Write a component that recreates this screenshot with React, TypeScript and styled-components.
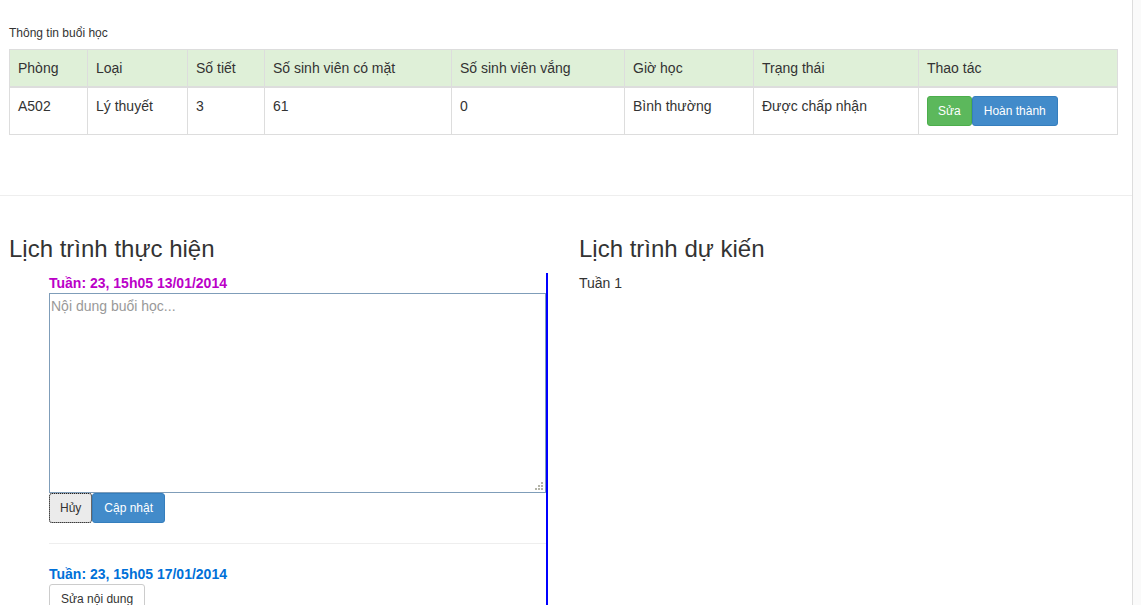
import styled, { createGlobalStyle } from "styled-components";

const GlobalStyle = createGlobalStyle`
  html, body {
    margin: 0;
    padding: 0;
    background: #fff;
  }
  body {
    font-family: "Liberation Sans", Arial, sans-serif;
    font-size: 14px;
    line-height: 20px;
    color: #333;
  }
  * {
    box-sizing: border-box;
  }
`;

const Page = styled.div`
  display: grid;
  grid-template-columns: 1fr 9px;
  height: 605px;
  overflow: hidden;
`;

const Main = styled.main`
  display: flex;
  flex-direction: column;
  min-width: 0;
`;

const SideStrip = styled.aside`
  border-left: 1px solid #ddd;
  background: #fafafa;
`;

const InfoSection = styled.section`
  padding: 25px 15px 60px 9px;
  border-bottom: 1px solid #eee;
`;

const Caption = styled.div`
  font-size: 12px;
  line-height: 17px;
  margin-bottom: 7px;
`;

const Table = styled.table`
  width: 1108px;
  border-collapse: collapse;
  table-layout: fixed;
  border: 1px solid #ddd;
`;

const HeadCell = styled.th`
  text-align: left;
  font-weight: normal;
  background: #dff0d8;
  padding: 8px;
  line-height: 20px;
  border: 1px solid #ddd;
  border-bottom-width: 2px;
  vertical-align: bottom;
`;

const Cell = styled.td`
  padding: 8px;
  line-height: 20px;
  border: 1px solid #ddd;
  vertical-align: top;
`;

const ButtonGroup = styled.div`
  display: flex;
`;

const Button = styled.button<{ $variant: "success" | "primary" | "default" | "cancel" }>`
  font-family: "Liberation Sans", Arial, sans-serif;
  font-size: 12px;
  line-height: 18px;
  height: 30px;
  padding: 5px 11px;
  border-radius: 3px;
  border: 1px solid;
  cursor: pointer;
  ${({ $variant }) =>
    $variant === "success"
      ? "background: #5cb85c; border-color: #4cae4c; color: #fff; padding: 5px 10px;"
      : $variant === "primary"
      ? "background: #428bca; border-color: #357ebd; color: #fff;"
      : $variant === "cancel"
      ? "background: #ebebeb; border-color: #adadad; color: #333; outline: 1px dotted #222; outline-offset: -1px; padding: 5px 10px;"
      : "background: #fff; border-color: #ccc; color: #333;"}
`;

const Schedule = styled.section`
  display: grid;
  grid-template-columns: 539px 1fr;
  column-gap: 31px;
  padding: 40px 0 0 9px;
`;

const Column = styled.div`
  display: flex;
  flex-direction: column;
`;

const Heading = styled.h3`
  margin: 0 0 11px;
  font-size: 24px;
  font-weight: normal;
  line-height: 26px;
  color: #333;
`;

const Timeline = styled.div`
  padding-left: 40px;
  border-right: 2px solid #0000ff;
  height: 340px;
`;

const Entry = styled.div`
  display: flex;
  flex-direction: column;
  align-items: flex-start;
`;

const EntryTitle = styled.div<{ $color: string }>`
  font-size: 14px;
  font-weight: bold;
  line-height: 20px;
  color: ${({ $color }) => $color};
`;

const TextBox = styled.div`
  position: relative;
  width: 100%;
`;

const TextArea = styled.textarea`
  display: block;
  width: 100%;
  height: 200px;
  border: 1px solid #7f9db9;
  padding: 3px 1px;
  font-family: "Liberation Sans", Arial, sans-serif;
  font-size: 14px;
  line-height: 18px;
  color: #333;
  resize: none;
  outline: none;
  &::placeholder {
    color: #999;
  }
`;

const Grip = styled.svg`
  position: absolute;
  right: 3px;
  bottom: 3px;
`;

const Divider = styled.hr`
  width: 100%;
  border: 0;
  border-top: 1px solid #eee;
  margin: 20px 0;
`;

const Plain = styled.div`
  line-height: 20px;
`;

const columns = [78, 100, 77, 187, 173, 129, 165, 199];
const headers = [
  "Phòng",
  "Loại",
  "Số tiết",
  "Số sinh viên có mặt",
  "Số sinh viên vắng",
  "Giờ học",
  "Trạng thái",
  "Thao tác",
];
const row = ["A502", "Lý thuyết", "3", "61", "0", "Bình thường", "Được chấp nhận"];

export default function App() {
  return (
    <>
      <GlobalStyle />
      <Page>
        <Main>
          <InfoSection>
            <Caption>Thông tin buổi học</Caption>
            <Table>
              <colgroup>
                {columns.map((w, i) => (
                  <col key={i} style={{ width: w }} />
                ))}
              </colgroup>
              <thead>
                <tr>
                  {headers.map((h) => (
                    <HeadCell key={h}>{h}</HeadCell>
                  ))}
                </tr>
              </thead>
              <tbody>
                <tr>
                  {row.map((c, i) => (
                    <Cell key={i}>{c}</Cell>
                  ))}
                  <Cell>
                    <ButtonGroup>
                      <Button $variant="success">Sửa</Button>
                      <Button $variant="primary">Hoàn thành</Button>
                    </ButtonGroup>
                  </Cell>
                </tr>
              </tbody>
            </Table>
          </InfoSection>

          <Schedule>
            <Column>
              <Heading>Lịch trình thực hiện</Heading>
              <Timeline>
                <Entry>
                  <EntryTitle $color="#bb00c8">Tuần: 23, 15h05 13/01/2014</EntryTitle>
                  <TextBox>
                    <TextArea placeholder="Nội dung buổi học..." />
                    <Grip width="9" height="9" viewBox="0 0 9 9">
                      <g fill="#b4b4a8">
                        <rect x="7" y="1" width="2" height="2" />
                        <rect x="4" y="4" width="2" height="2" />
                        <rect x="7" y="4" width="2" height="2" />
                        <rect x="1" y="7" width="2" height="2" />
                        <rect x="4" y="7" width="2" height="2" />
                        <rect x="7" y="7" width="2" height="2" />
                      </g>
                    </Grip>
                  </TextBox>
                  <ButtonGroup>
                    <Button $variant="cancel">Hủy</Button>
                    <Button $variant="primary">Cập nhật</Button>
                  </ButtonGroup>
                  <Divider />
                  <EntryTitle $color="#0070d8">Tuần: 23, 15h05 17/01/2014</EntryTitle>
                  <Button $variant="default">Sửa nội dung</Button>
                </Entry>
              </Timeline>
            </Column>
            <Column>
              <Heading>Lịch trình dự kiến</Heading>
              <Plain>Tuần 1</Plain>
            </Column>
          </Schedule>
        </Main>
        <SideStrip />
      </Page>
    </>
  );
}
